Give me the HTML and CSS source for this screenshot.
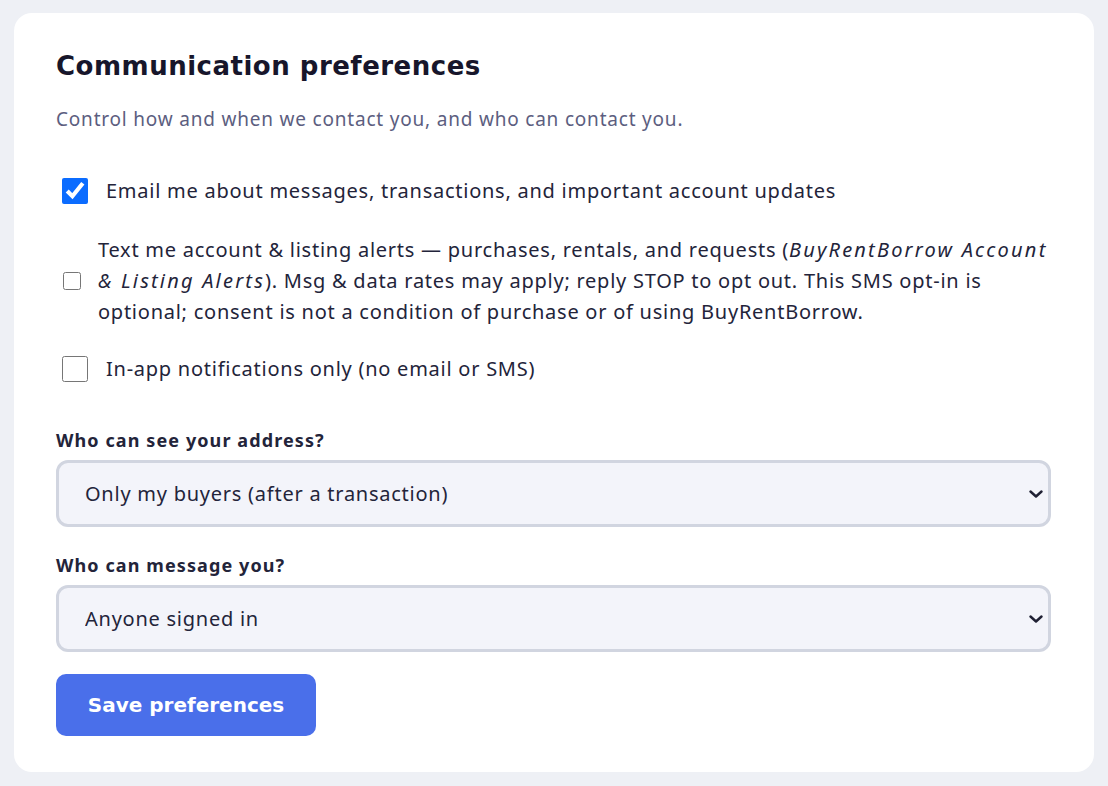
FILE: index.html
```
<!DOCTYPE html>
<html>

<head>
    <title>Communication preferences</title>
    <link rel="stylesheet" href="styles.css">
</head>

<body>
    <div class="card">
        <h2 class="title">Communication preferences</h2>
        <p class="lead">Control how and when we contact you, and who can contact you.</p>

        <label class="option first">
            <input type="checkbox" class="check" checked>
            <span>Email me about messages, transactions, and important account updates</span>
        </label>

        <label class="option sms">
            <input type="checkbox" class="check small">
            <span>Text me account &amp; listing alerts — purchases, rentals, and requests (<em>BuyRentBorrow Account &amp; Listing Alerts</em>). Msg &amp; data rates may apply; reply STOP to opt out. This SMS opt-in is optional; consent is not a condition of purchase or of using BuyRentBorrow.</span>
        </label>

        <label class="option">
            <input type="checkbox" class="check">
            <span>In-app notifications only (no email or SMS)</span>
        </label>

        <div class="field first">
            <label class="field-label">Who can see your address?</label>
            <div class="select-wrap">
                <select class="select">
                    <option>Only my buyers (after a transaction)</option>
                    <option>Anyone signed in</option>
                    <option>Nobody</option>
                </select>
                <svg class="chevron" width="14" height="8" viewBox="0 0 14 8">
                    <path d="M1.5 1.5 L7 6.5 L12.5 1.5" fill="none" stroke="#1f2033" stroke-width="2.4" stroke-linecap="round" stroke-linejoin="round"/>
                </svg>
            </div>
        </div>

        <div class="field">
            <label class="field-label">Who can message you?</label>
            <div class="select-wrap">
                <select class="select">
                    <option>Anyone signed in</option>
                    <option>Only people I've traded with</option>
                    <option>Nobody</option>
                </select>
                <svg class="chevron" width="14" height="8" viewBox="0 0 14 8">
                    <path d="M1.5 1.5 L7 6.5 L12.5 1.5" fill="none" stroke="#1f2033" stroke-width="2.4" stroke-linecap="round" stroke-linejoin="round"/>
                </svg>
            </div>
        </div>

        <button class="save">Save preferences</button>
    </div>
</body>

</html>
```

FILE: styles.css
```
body {
    margin: 13px 14px;
    background-color: #eef0f5;
    font-family: "Noto Sans", sans-serif;
    color: #23243a;
}

.card {
    background-color: #fff;
    border-radius: 18px;
    padding: 36px 43px 36px 42px;
}

.title {
    margin: 0;
    font-family: "DejaVu Sans", sans-serif;
    font-weight: 700;
    font-size: 26px;
    letter-spacing: 0.5px;
    line-height: 34px;
    color: #17162b;
}

.lead {
    margin: 24px 0 43px;
    font-size: 19px;
    line-height: 25px;
    letter-spacing: 0.8px;
    color: #5c5e80;
}

.option {
    display: flex;
    align-items: center;
    gap: 18px;
    font-size: 20px;
    line-height: 31px;
    letter-spacing: 0.75px;
    margin-bottom: 26px;
    cursor: pointer;
}

.option.first {
    margin-bottom: 28px;
}

.option em {
    letter-spacing: 2.2px;
}

.check {
    width: 26px;
    height: 26px;
    margin: 0 0 0 6px;
    flex-shrink: 0;
    accent-color: #0b6cff;
}

.check.small {
    width: 18px;
    height: 18px;
    margin-left: 7px;
}

.option.sms {
    gap: 17px;
}

.field {
    margin-top: 26px;
}

.field.first {
    margin-top: 44px;
}

.field-label {
    display: block;
    font-weight: 700;
    font-size: 18px;
    line-height: 25px;
    letter-spacing: 1.1px;
    margin-bottom: 7px;
}

.select-wrap {
    position: relative;
}

.select {
    display: block;
    width: 100%;
    height: 67px;
    margin: 0;
    padding: 0 40px 0 26px;
    font-family: "Noto Sans", sans-serif;
    font-size: 20px;
    letter-spacing: 0.75px;
    color: #23243a;
    background-color: #f3f4fa;
    border: 3px solid #d1d5e0;
    border-radius: 12px;
    appearance: none;
}

.chevron {
    position: absolute;
    right: 8px;
    top: 30px;
    pointer-events: none;
}

.save {
    display: block;
    margin-top: 22px;
    width: 260px;
    height: 62px;
    border: none;
    border-radius: 10px;
    background-color: #4a6fea;
    color: #fff;
    font-family: "DejaVu Sans", sans-serif;
    font-weight: 700;
    font-size: 20px;
}
```
